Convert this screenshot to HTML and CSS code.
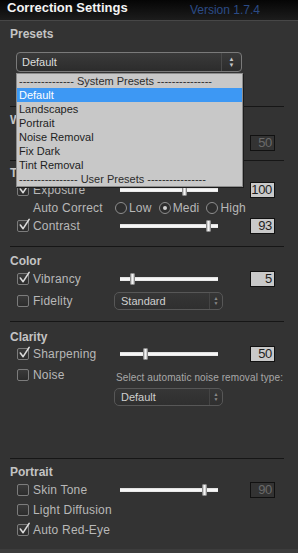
FILE: index.html
```html
<!DOCTYPE html>
<html lang="en">
<head>
    <meta charset="UTF-8">
    <title>Correction Settings</title>
    <link rel="stylesheet" href="styles.css">
</head>
<body>
    <header class="app-header">
        <h1 class="app-title">Correction Settings</h1>
        <span class="app-version">Version 1.7.4</span>
    </header>

    <main class="panel">
        <section class="section section-presets">
            <h2 class="section-title">Presets</h2>
            <div class="select select-wide">
                <span class="select-value">Default</span>
                <span class="select-arrows">&#9650;<br>&#9660;</span>
            </div>
            <ul class="preset-list">
                <li class="preset-group">--------------- System Presets ---------------</li>
                <li class="preset-item is-selected">Default</li>
                <li class="preset-item">Landscapes</li>
                <li class="preset-item">Portrait</li>
                <li class="preset-item">Noise Removal</li>
                <li class="preset-item">Fix Dark</li>
                <li class="preset-item">Tint Removal</li>
                <li class="preset-group">---------------- User Presets ----------------</li>
            </ul>
        </section>

        <hr class="divider">

        <section class="section section-white">
            <h2 class="section-title">W</h2>
            <div class="row row-spaced">
                <span class="check"></span>
                <span class="label"></span>
                <div class="slider"><span class="thumb" style="left: 47px"></span></div>
                <span class="value is-disabled">50</span>
            </div>
        </section>

        <hr class="divider">

        <section class="section section-tone">
            <h2 class="section-title">Tone</h2>
            <div class="row row-short">
                <span class="check is-checked"><svg viewBox="0 0 14 14"><path d="M2.5 7.5 L5.5 11.5 L12 1.5"/></svg></span>
                <span class="label">Exposure</span>
                <div class="slider"><span class="thumb" style="left: 62px"></span></div>
                <span class="value">100</span>
            </div>
            <div class="row row-short">
                <span class="label label-plain">Auto Correct</span>
                <span class="radio"></span><span class="radio-label">Low</span>
                <span class="radio is-on"></span><span class="radio-label">Medi</span>
                <span class="radio"></span><span class="radio-label">High</span>
            </div>
            <div class="row row-short">
                <span class="check is-checked"><svg viewBox="0 0 14 14"><path d="M2.5 7.5 L5.5 11.5 L12 1.5"/></svg></span>
                <span class="label">Contrast</span>
                <div class="slider"><span class="thumb" style="left: 86px"></span></div>
                <span class="value">93</span>
            </div>
        </section>

        <hr class="divider">

        <section class="section section-color">
            <h2 class="section-title">Color</h2>
            <div class="row">
                <span class="check is-checked"><svg viewBox="0 0 14 14"><path d="M2.5 7.5 L5.5 11.5 L12 1.5"/></svg></span>
                <span class="label">Vibrancy</span>
                <div class="slider"><span class="thumb" style="left: 10px"></span></div>
                <span class="value">5</span>
            </div>
            <div class="row row-gap">
                <span class="check"></span>
                <span class="label">Fidelity</span>
                <div class="select select-small select-inline">
                    <span class="select-value">Standard</span>
                    <span class="select-arrows">&#9650;<br>&#9660;</span>
                </div>
            </div>
        </section>

        <hr class="divider">

        <section class="section section-clarity">
            <h2 class="section-title">Clarity</h2>
            <div class="row row-short">
                <span class="check is-checked"><svg viewBox="0 0 14 14"><path d="M2.5 7.5 L5.5 11.5 L12 1.5"/></svg></span>
                <span class="label">Sharpening</span>
                <div class="slider"><span class="thumb" style="left: 23px"></span></div>
                <span class="value">50</span>
            </div>
            <div class="row row-gap">
                <span class="check"></span>
                <span class="label">Noise</span>
                <span class="hint">Select automatic noise removal type:</span>
            </div>
            <div class="select select-small select-noise">
                <span class="select-value">Default</span>
                <span class="select-arrows">&#9650;<br>&#9660;</span>
            </div>
        </section>

        <hr class="divider">

        <section class="section section-portrait">
            <h2 class="section-title">Portrait</h2>
            <div class="row">
                <span class="check"></span>
                <span class="label">Skin Tone</span>
                <div class="slider"><span class="thumb" style="left: 82px"></span></div>
                <span class="value is-disabled">90</span>
            </div>
            <div class="row">
                <span class="check"></span>
                <span class="label">Light Diffusion</span>
            </div>
            <div class="row">
                <span class="check is-checked"><svg viewBox="0 0 14 14"><path d="M2.5 7.5 L5.5 11.5 L12 1.5"/></svg></span>
                <span class="label">Auto Red-Eye</span>
            </div>
        </section>
    </main>
</body>
</html>
```

FILE: styles.css
```css
:root {
    --panel-bg: #333333;
    --text-color: #b8b8b8;
    --title-color: #c4c4c4;
    --line-dark: #161616;
}

* {
    box-sizing: border-box;
}

body {
    margin: 0;
    width: 298px;
    height: 553px;
    overflow: hidden;
    background: #3c3c3c;
    font-family: 'Liberation Sans', Arial, sans-serif;
    color: var(--text-color);
}

.app-header {
    display: flex;
    align-items: flex-start;
    height: 21px;
    padding: 0 38px 0 7px;
    background: linear-gradient(#050505, #1c1c1c);
    border-bottom: 1px solid #474747;
}

.app-title {
    margin: 0;
    font-size: 13px;
    line-height: 16px;
    font-weight: 700;
    color: #f4f4f4;
}

.app-version {
    margin-left: auto;
    margin-top: 3px;
    font-size: 12px;
    line-height: 14px;
    color: #2b4b86;
}

.panel {
    position: relative;
    padding: 0 14px 9px 10px;
    background: var(--panel-bg);
}

.section {
    position: relative;
}

.section-title {
    margin: 0;
    height: 16px;
    font-size: 12px;
    line-height: 16px;
    font-weight: 700;
    color: var(--title-color);
}

.section-presets { padding: 5px 0 34px; }
.section-white { padding: 5px 0 7px; }
.section-tone { padding: 4px 0 11px; }
.section-color { padding: 6px 0 10px; }
.section-clarity { padding: 7px 0 52px; }
.section-portrait { padding: 5px 0 0; }

.divider {
    margin: 0;
    height: 1px;
    border: none;
    background: var(--line-dark);
}

/* rows */
.row {
    display: flex;
    align-items: center;
    height: 20px;
    padding-left: 7px;
}

.row-short { height: 18px; }
.row-gap { margin-top: 2px; }
.row-spaced { margin-top: 5px; }

.check {
    position: relative;
    flex: none;
    width: 12px;
    height: 12px;
    border: 1px solid #7c7c7c;
    border-radius: 2px;
    background: linear-gradient(#3a3a3a, #2c2c2c);
}

.check svg {
    position: absolute;
    left: 0;
    top: -3px;
    width: 13px;
    height: 13px;
    overflow: visible;
}

.check svg path {
    fill: none;
    stroke: #dcdcdc;
    stroke-width: 1.7;
    stroke-linecap: round;
    stroke-linejoin: round;
}

.label {
    flex: none;
    width: 87px;
    margin-left: 4px;
    font-size: 12px;
    letter-spacing: 0.2px;
    white-space: nowrap;
}

.label-plain {
    width: 82px;
    margin-left: 16px;
}

.slider {
    position: relative;
    flex: none;
    width: 98px;
    height: 4px;
    background: linear-gradient(#d8d8d8, #ffffff 50%, #e2e2e2);
}

.thumb {
    position: absolute;
    top: -4px;
    width: 5px;
    height: 12px;
    border: 1px solid #8a8a8a;
    border-radius: 1px;
    background: linear-gradient(90deg, #bdbdbd, #f4f4f4, #bdbdbd);
}

.value {
    flex: none;
    margin-left: 32px;
    width: 25px;
    height: 16px;
    padding-right: 2px;
    border: 1px solid #111;
    background: #c9c9c9;
    color: #1e1e1e;
    text-align: right;
    font-family: 'Liberation Sans Narrow', 'Liberation Sans', sans-serif;
    font-size: 13px;
    letter-spacing: -0.3px;
    line-height: 14px;
}

.value.is-disabled {
    background: transparent;
    color: #6a6a6a;
}

.radio {
    flex: none;
    position: relative;
    width: 12px;
    height: 12px;
    border: 1px solid #8e8e8e;
    border-radius: 50%;
    background: #2e2e2e;
}

.radio.is-on::after {
    content: '';
    position: absolute;
    left: 3px;
    top: 3px;
    width: 4px;
    height: 4px;
    border-radius: 50%;
    background: #d0d0d0;
}

.radio-label {
    margin: 0 7px 0 2px;
    font-size: 12px;
    letter-spacing: 0.2px;
}

.hint {
    margin-left: -4px;
    margin-top: 5px;
    font-size: 10px;
    letter-spacing: 0.1px;
    color: #a8a8a8;
    white-space: nowrap;
}

/* selects */
.select {
    position: relative;
    display: flex;
    align-items: center;
    border: 1px solid #7a7a7a;
    border-radius: 4px;
    background: linear-gradient(#3a3a3a, #2c2c2c);
    color: #dedede;
    font-size: 11px;
}

.select-value {
    flex: 1;
    padding-left: 5px;
}

.select-arrows {
    align-self: stretch;
    display: flex;
    flex-direction: column;
    justify-content: center;
    width: 20px;
    border-left: 1px solid #4a4a4a;
    text-align: center;
    font-size: 6px;
    line-height: 6px;
    color: #c8c8c8;
}

.select-wide {
    margin: 10px 0 0 6px;
    width: 226px;
    height: 20px;
}

.select-small {
    flex: none;
    width: 109px;
    height: 18px;
    border-color: #575757;
    border-radius: 5px;
    background: linear-gradient(#363636, #2f2f2f);
    color: #cfcfcf;
}

.select-small .select-arrows {
    width: 13px;
    border-left-color: #444;
    font-size: 5px;
    line-height: 5px;
    color: #8a8a8a;
}

.select-small .select-value {
    padding-left: 6px;
}

.select-inline {
    margin-left: -6px;
}

.select-noise {
    margin: 3px 0 0 104px;
}

/* open preset menu */
.preset-list {
    position: absolute;
    left: 6px;
    top: 52px;
    z-index: 5;
    width: 227px;
    margin: 0;
    padding: 0;
    list-style: none;
    border: 1px solid #8c8c8c;
    background: #c8c8c8;
    box-shadow: 1px 1px 0 #1c1c1c;
    font-size: 11px;
    color: #1e1e1e;
}

.preset-list li {
    height: 14px;
    line-height: 14px;
    padding-left: 2px;
    white-space: nowrap;
}

.preset-group {
    color: #2c2c2c;
}

.preset-item.is-selected {
    background: #3d98f4;
    color: #fff;
}
```
